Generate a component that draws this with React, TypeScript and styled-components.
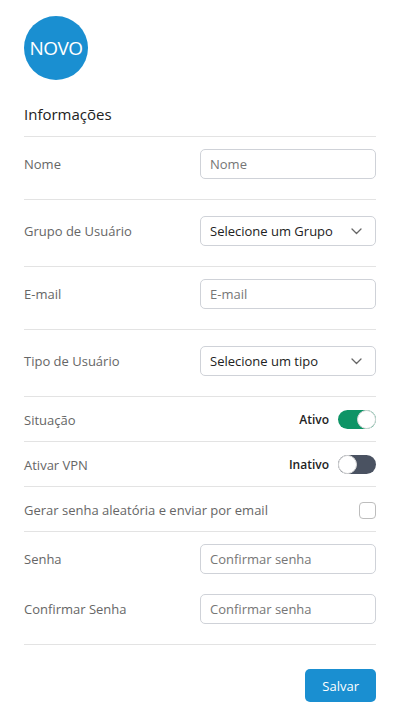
import * as React from 'react'
import styled, { createGlobalStyle } from 'styled-components'

const GlobalStyle = createGlobalStyle`
  html, body {
    margin: 0;
    padding: 0;
    background: #FFFFFF;
    font-family: 'Open Sans', 'Noto Sans', sans-serif;
  }
`

const Page = styled.div`
  width: 397px;
  padding: 16px 21px 14px 24px;
  box-sizing: border-box;
`

const Badge = styled.div`
  width: 64px;
  height: 64px;
  border-radius: 50%;
  background-color: #1A8FD1;
  color: #FFFFFF;
  display: flex;
  align-items: center;
  justify-content: center;
  font-size: 19px;
  letter-spacing: -0.5px;
`

const Title = styled.h4`
  margin: 24px 0 0;
  padding-bottom: 12px;
  font-size: 15px;
  line-height: 20px;
  font-weight: 400;
  color: #222222;
  border-bottom: 1px solid #E3E3E3;
`

const Row = styled('div')<{ top?: number; bottom?: number }>`
  display: flex;
  align-items: center;
  justify-content: space-between;
  padding: ${p => p.top ?? 12}px 0 ${p => p.bottom ?? 20}px;
  border-bottom: 1px solid #E3E3E3;
`

const Label = styled.span`
  font-size: 13px;
  color: #666666;
`

const Field = styled.input`
  width: 176px;
  height: 30px;
  box-sizing: border-box;
  border: 1px solid #CFD2D8;
  border-radius: 5px;
  padding: 0 9px;
  font-family: inherit;
  font-size: 13px;
  color: #333333;
  outline: none;
  &::placeholder {
    color: #767676;
  }
`

const SelectBox = styled.div`
  width: 176px;
  height: 30px;
  box-sizing: border-box;
  border: 1px solid #CFD2D8;
  border-radius: 5px;
  padding: 0 13px 0 9px;
  display: flex;
  align-items: center;
  justify-content: space-between;
  font-size: 13px;
  color: #222222;
`

const SwitchWrap = styled.div`
  display: flex;
  align-items: center;
  gap: 9px;
`

const SwitchText = styled.span`
  font-size: 12px;
  font-weight: 600;
  color: #222222;
`

const Track = styled('div')<{ on: boolean }>`
  width: 38px;
  height: 19px;
  border-radius: 10px;
  background-color: ${p => (p.on ? '#0E9466' : '#4A5261')};
  display: flex;
  justify-content: ${p => (p.on ? 'flex-end' : 'flex-start')};
  align-items: center;
`

const Knob = styled.div`
  width: 19px;
  height: 19px;
  box-sizing: border-box;
  border-radius: 50%;
  background: #FFFFFF;
  border: 1px solid #DADADA;
`

const Checkbox = styled.div`
  width: 17px;
  height: 17px;
  box-sizing: border-box;
  border: 1px solid #BDBDBD;
  border-radius: 4px;
`

const PasswordBlock = styled.div`
  display: flex;
  flex-direction: column;
  gap: 20px;
  padding: 12px 0 20px;
  border-bottom: 1px solid #E3E3E3;
`

const PasswordRow = styled.div`
  display: flex;
  align-items: center;
  justify-content: space-between;
`

const Footer = styled.div`
  display: flex;
  justify-content: flex-end;
  padding-top: 24px;
`

const SaveButton = styled.button`
  height: 33px;
  padding: 0 17px;
  border: none;
  border-radius: 5px;
  background-color: #1A8FD1;
  color: #FFFFFF;
  font-family: inherit;
  font-size: 13px;
`

const Chevron = () => (
  <svg width="11" height="7" viewBox="0 0 11 7" fill="none">
    <path d="M1 1l4.5 4.5L10 1" stroke="#666" strokeWidth="1.3" strokeLinecap="round" strokeLinejoin="round" />
  </svg>
)

const Toggle = ({ on, text }: { on: boolean; text: string }) => (
  <SwitchWrap>
    <SwitchText>{text}</SwitchText>
    <Track on={on}>
      <Knob />
    </Track>
  </SwitchWrap>
)

const App = () => {
  return (
    <Page>
      <GlobalStyle />
      <Badge>NOVO</Badge>
      <Title>Informações</Title>

      <Row>
        <Label>Nome</Label>
        <Field placeholder="Nome" />
      </Row>
      <Row top={16}>
        <Label>Grupo de Usuário</Label>
        <SelectBox>
          Selecione um Grupo
          <Chevron />
        </SelectBox>
      </Row>
      <Row>
        <Label>E-mail</Label>
        <Field placeholder="E-mail" />
      </Row>
      <Row top={16}>
        <Label>Tipo de Usuário</Label>
        <SelectBox>
          Selecione um tipo
          <Chevron />
        </SelectBox>
      </Row>

      <Row top={13} bottom={12}>
        <Label>Situação</Label>
        <Toggle on={true} text="Ativo" />
      </Row>
      <Row top={13} bottom={12}>
        <Label>Ativar VPN</Label>
        <Toggle on={false} text="Inativo" />
      </Row>
      <Row top={14} bottom={12}>
        <Label>Gerar senha aleatória e enviar por email</Label>
        <Checkbox />
      </Row>

      <PasswordBlock>
        <PasswordRow>
          <Label>Senha</Label>
          <Field placeholder="Confirmar senha" />
        </PasswordRow>
        <PasswordRow>
          <Label>Confirmar Senha</Label>
          <Field placeholder="Confirmar senha" />
        </PasswordRow>
      </PasswordBlock>

      <Footer>
        <SaveButton>Salvar</SaveButton>
      </Footer>
    </Page>
  )
}

export default App
